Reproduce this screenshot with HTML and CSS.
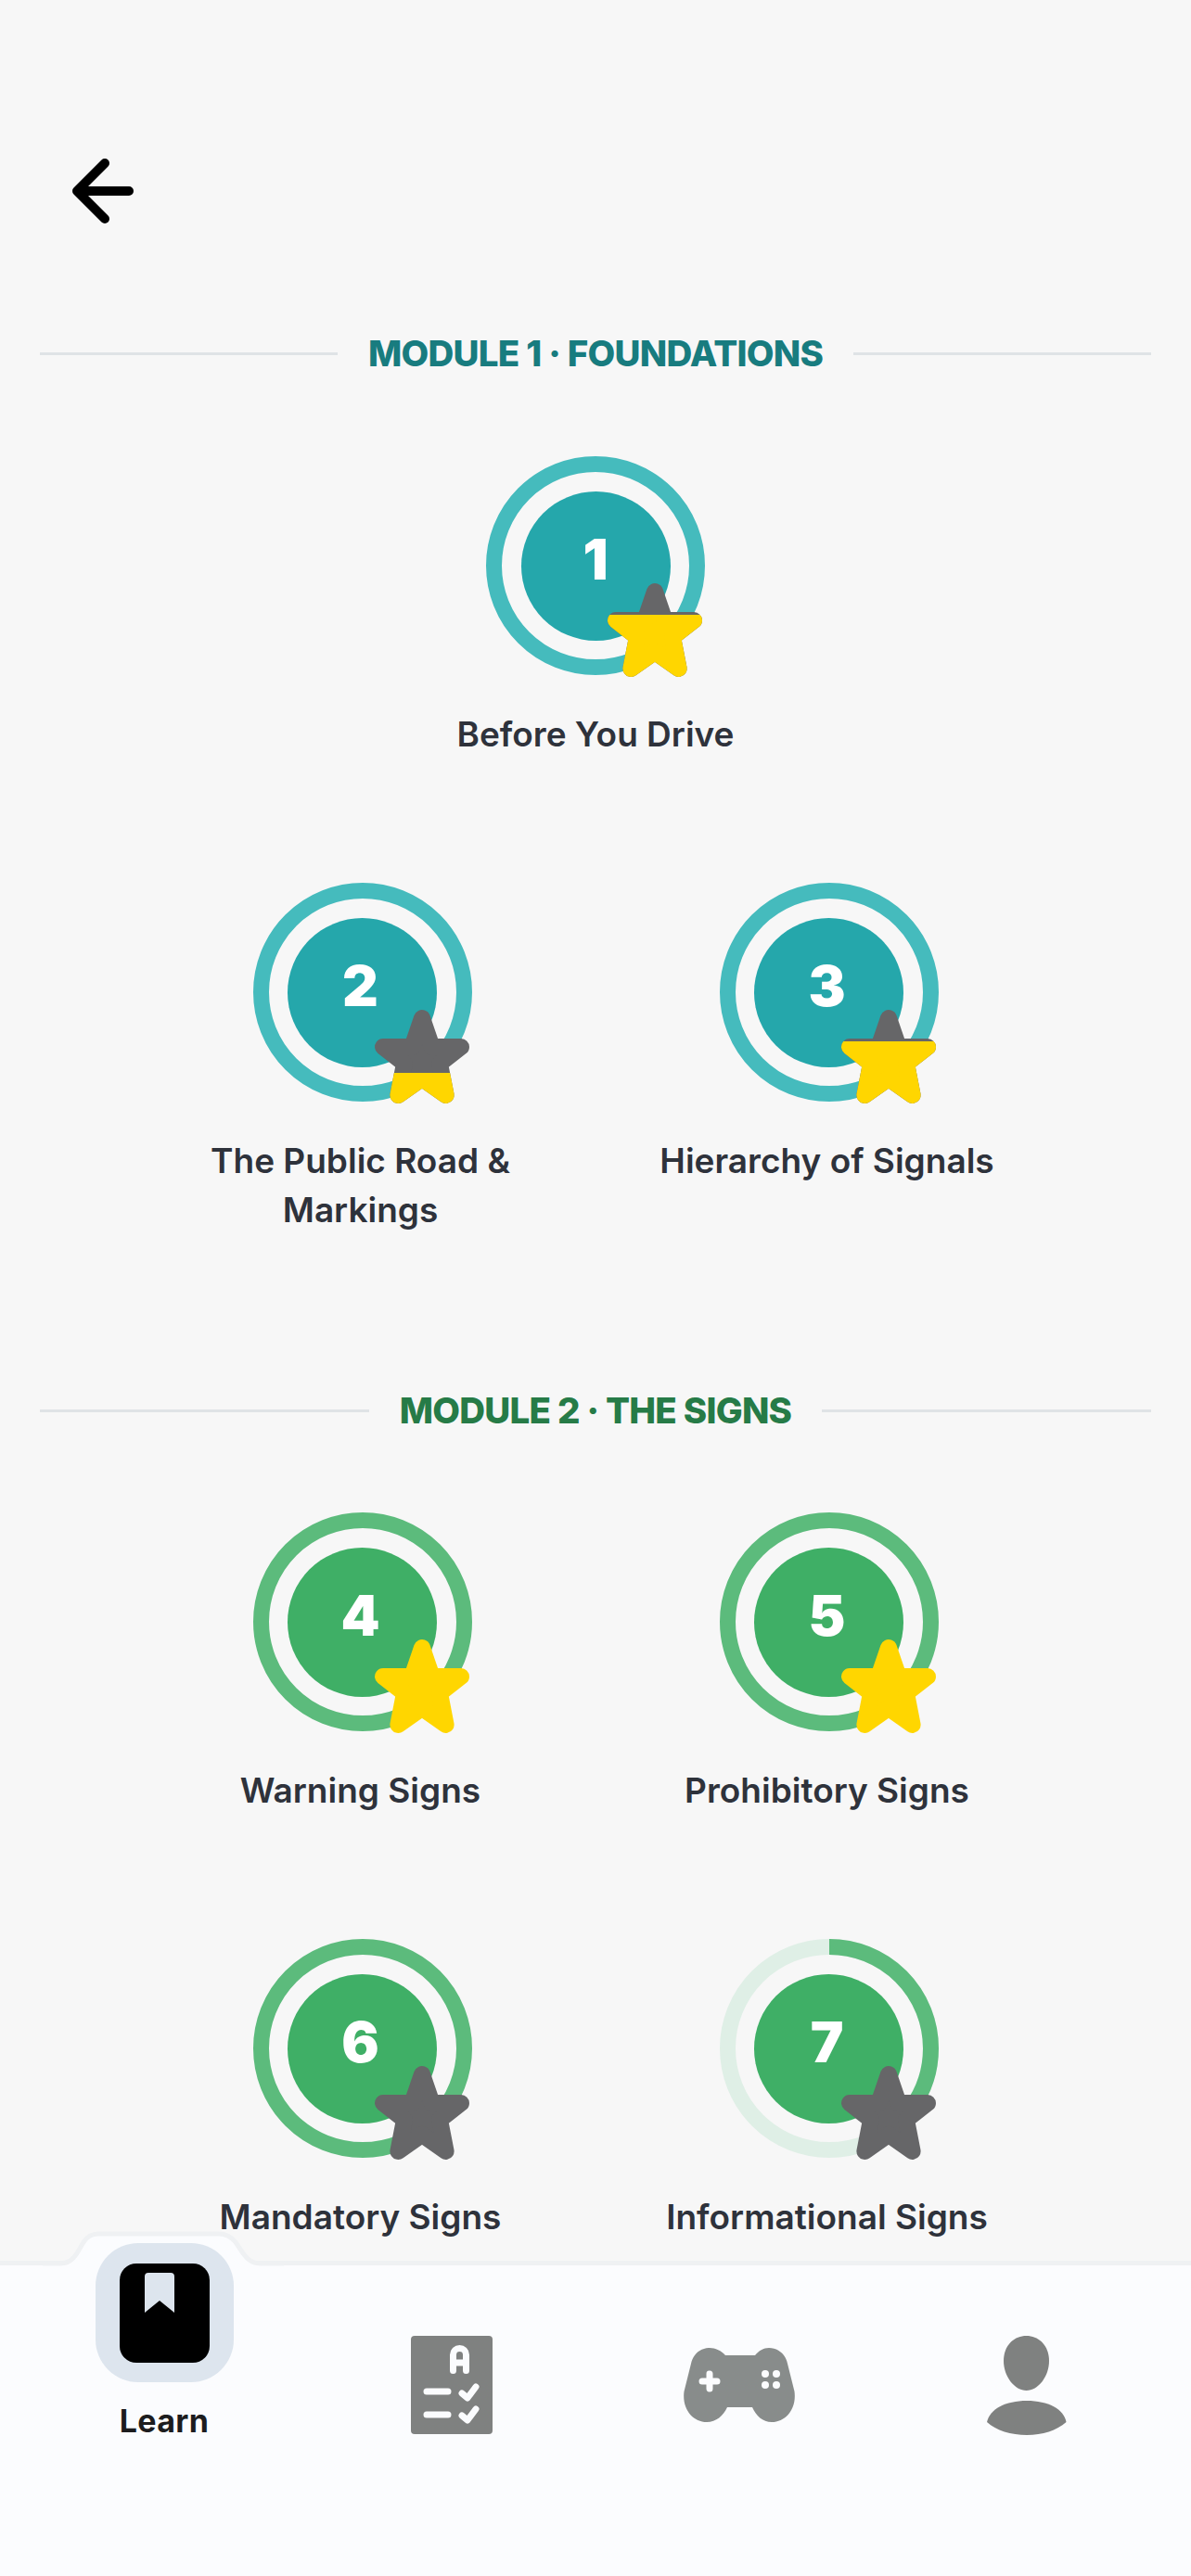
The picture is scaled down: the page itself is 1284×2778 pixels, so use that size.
FILE: index.html
```html
<!DOCTYPE html>
<html lang="en">
<head>
<meta charset="utf-8">
<title>Learn</title>
<link rel="stylesheet" href="styles.css">
</head>
<body>
<svg class="defs" width="0" height="0" aria-hidden="true">
  <defs>
    <polygon id="star" points="51,9 61.6,40 93,40 70,58 76.6,92 51,74 25.4,92 32,58 9,40 40.4,40"/>
    <clipPath id="fill-bottom-66"><rect x="-5" y="34" width="112" height="72"/></clipPath>
    <clipPath id="fill-bottom-33"><rect x="-5" y="68" width="112" height="38"/></clipPath>
  </defs>
</svg>
<div class="screen">
  <main class="content">
    <header class="topbar">
      <button class="back" aria-label="Back">
        <svg width="70" height="74" viewBox="0 0 70 74"><path d="M39 7 L9 37 L39 67 M9 37 H65" /></svg>
      </button>
    </header>

    <section class="module module-teal">
      <h2 class="module-title"><span>MODULE 1 · FOUNDATIONS</span></h2>
      <div class="path">
        <div class="lesson lesson-wide">
          <div class="badge">
            <svg class="ring" viewBox="0 0 236 236"><circle class="ring-value" cx="118" cy="118" r="109.5"/></svg>
            <div class="disc"><span>1</span></div>
            <svg class="star" viewBox="0 0 102 101"><use href="#star" class="star-empty"/><use href="#star" class="star-full" clip-path="url(#fill-bottom-66)"/></svg>
          </div>
          <p class="lesson-name">Before You Drive</p>
        </div>
        <div class="lesson">
          <div class="badge">
            <svg class="ring" viewBox="0 0 236 236"><circle class="ring-value" cx="118" cy="118" r="109.5"/></svg>
            <div class="disc"><span>2</span></div>
            <svg class="star" viewBox="0 0 102 101"><use href="#star" class="star-empty"/><use href="#star" class="star-full" clip-path="url(#fill-bottom-33)"/></svg>
          </div>
          <p class="lesson-name">The Public Road &amp; Markings</p>
        </div>
        <div class="lesson">
          <div class="badge">
            <svg class="ring" viewBox="0 0 236 236"><circle class="ring-value" cx="118" cy="118" r="109.5"/></svg>
            <div class="disc"><span>3</span></div>
            <svg class="star" viewBox="0 0 102 101"><use href="#star" class="star-empty"/><use href="#star" class="star-full" clip-path="url(#fill-bottom-66)"/></svg>
          </div>
          <p class="lesson-name">Hierarchy of Signals</p>
        </div>
      </div>
    </section>

    <section class="module module-green">
      <h2 class="module-title"><span>MODULE 2 · THE SIGNS</span></h2>
      <div class="path">
        <div class="lesson">
          <div class="badge">
            <svg class="ring" viewBox="0 0 236 236"><circle class="ring-value" cx="118" cy="118" r="109.5"/></svg>
            <div class="disc"><span>4</span></div>
            <svg class="star" viewBox="0 0 102 101"><use href="#star" class="star-full"/></svg>
          </div>
          <p class="lesson-name">Warning Signs</p>
        </div>
        <div class="lesson">
          <div class="badge">
            <svg class="ring" viewBox="0 0 236 236"><circle class="ring-value" cx="118" cy="118" r="109.5"/></svg>
            <div class="disc"><span>5</span></div>
            <svg class="star" viewBox="0 0 102 101"><use href="#star" class="star-full"/></svg>
          </div>
          <p class="lesson-name">Prohibitory Signs</p>
        </div>
        <div class="lesson">
          <div class="badge">
            <svg class="ring" viewBox="0 0 236 236"><circle class="ring-value" cx="118" cy="118" r="109.5"/></svg>
            <div class="disc"><span>6</span></div>
            <svg class="star" viewBox="0 0 102 101"><use href="#star" class="star-empty"/></svg>
          </div>
          <p class="lesson-name">Mandatory Signs</p>
        </div>
        <div class="lesson">
          <div class="badge">
            <svg class="ring" viewBox="0 0 236 236"><circle class="ring-track" cx="118" cy="118" r="109.5"/><circle class="ring-value ring-partial" cx="118" cy="118" r="109.5" pathLength="100"/></svg>
            <div class="disc"><span>7</span></div>
            <svg class="star" viewBox="0 0 102 101"><use href="#star" class="star-empty"/></svg>
          </div>
          <p class="lesson-name">Informational Signs</p>
        </div>
      </div>
    </section>
  </main>

  <nav class="tabbar">
    <svg class="tab-bump" width="260" height="45" viewBox="0 0 260 45">
      <path class="tab-bump-fill" d="M18 35 C28 35 32 31 37 24 L44 12 C48 6 52 3 60 3 H190 C198 3 203 6 208 12 L216 24 C221 31 226 35 236 35 V45 H18 Z"/>
      <path class="tab-bump-line" d="M0 35 H18 C28 35 32 31 37 24 L44 12 C48 6 52 3 60 3 H190 C198 3 203 6 208 12 L216 24 C221 31 226 35 236 35 H260"/>
    </svg>
    <a class="tab tab-active">
      <span class="tab-pill">
        <svg width="97" height="107" viewBox="0 0 97 107"><rect width="97" height="107" rx="18" fill="#000"/><path d="M27 14 a4 4 0 0 1 4-4 h24 a4 4 0 0 1 4 4 V53 L43 40 L27 53 Z" fill="#dde5ee"/></svg>
      </span>
      <span class="tab-label">Learn</span>
    </a>
    <a class="tab">
      <svg class="tab-icon" width="88" height="106" viewBox="0 0 88 106">
        <rect width="88" height="106" rx="4" fill="#7f8180"/>
        <g class="glyph-lines"><path d="M45.500 37.500 V20.500 a7 7 0 0 1 14 0 V37.500 M45.500 29 H59.500 M17 60 H40 M17 85 H40 M55 62 L61 67 L70 55 M55 86 L61 91 L70 79"/></g>
      </svg>
    </a>
    <a class="tab">
      <svg class="tab-icon tab-icon-pad" width="120" height="80" viewBox="0 0 120 80">
        <path d="M45 8 H77 C81 3 86 0 92 0 C102 0 110 7 112 17 L119.500 47 C122 66 110 80 95 80 C85 80 78 73 74 64 H47 C43 73 35 80 25 80 C10 80 -2 66 .5 47 L8 17 C10 7 18 0 28 0 C34 0 41 3 45 8 Z" fill="#888c8b"/>
        <g class="glyph-lines"><path d="M28 28 V44 M20 36 H36"/></g>
        <g fill="#fbfcfe"><circle cx="88" cy="28" r="4"/><circle cx="100" cy="28" r="4"/><circle cx="88" cy="40" r="4"/><circle cx="100" cy="40" r="4"/></g>
      </svg>
    </a>
    <a class="tab">
      <svg class="tab-icon" width="86" height="107" viewBox="0 0 86 107" fill="#7f8180">
        <path d="M42.500 0 C56.500 0 67 11 67 27 C67 44 55 59 42.500 59 C30 59 18 44 18 27 C18 11 28.500 0 42.500 0 Z"/>
        <path d="M0 93 C3 79 20 70 43 70 C66 70 83 79 85.500 93 C75 102 60 107 43 107 C26 107 10 102 0 93 Z"/>
      </svg>
    </a>
  </nav>
</div>
</body>
</html>
```

FILE: styles.css
```css
* {
  box-sizing: border-box;
}

html,
body {
  margin: 0;
  padding: 0;
}

body {
  background: #f7f7f7;
  font-family: Inter, "Noto Sans", sans-serif;
}

.defs {
  position: absolute;
}

.screen {
  width: 1284px;
  height: 2778px;
  display: flex;
  flex-direction: column;
  overflow: hidden;
}

.content {
  flex: 1;
  min-height: 0;
  overflow: hidden;
  padding: 0 43px;
}

.topbar {
  height: 358px;
  padding: 169px 0 0 31px;
}

.back {
  display: block;
  width: 70px;
  height: 74px;
  padding: 0;
  border: 0;
  background: none;
}

.back svg {
  display: block;
  fill: none;
  stroke: #000;
  stroke-width: 10;
  stroke-linecap: round;
  stroke-linejoin: round;
  filter: blur(0.6px);
}

.module-title {
  display: flex;
  align-items: center;
  gap: 33px;
  height: 46px;
  margin: 0 0 88px;
  font-size: 38.500px;
  font-weight: 800;
  letter-spacing: -0.75px;
  line-height: 46px;
  white-space: nowrap;
}

.module-title::before,
.module-title::after {
  content: "";
  flex: 1;
  height: 3px;
  background: #dfe3e6;
}

.module + .module {
  margin-top: 86px;
}

.module-teal .module-title {
  color: #187c7f;
}

.module-green .module-title {
  color: #267b47;
  margin-bottom: 87px;
}

.path {
  display: grid;
  grid-template-columns: 503px 503px;
  grid-auto-rows: 460px;
  justify-content: center;
}

.lesson {
  display: flex;
  flex-direction: column;
  align-items: center;
}

.lesson-wide {
  grid-column: 1 / -1;
}

.badge {
  position: relative;
  width: 236px;
  height: 236px;
  flex: none;
  display: flex;
  align-items: center;
  justify-content: center;
}

.ring {
  position: absolute;
  inset: 0;
  fill: none;
  stroke-width: 17;
}

.module-teal .ring-value {
  stroke: #45bbbd;
}

.module-green .ring-value {
  stroke: #5cbb7c;
}

.ring-track {
  stroke: #dfefe6;
}

.ring-partial {
  stroke-dasharray: 35 100;
  transform: rotate(-90deg);
  transform-origin: 118px 118px;
}

.disc {
  width: 161px;
  height: 161px;
  border-radius: 50%;
  display: flex;
  align-items: center;
  justify-content: center;
  padding: 0 4px 14px 0;
  color: #fff;
  font-size: 60px;
  font-weight: 900;
  line-height: 1;
}

.lesson-wide .disc {
  padding-right: 0;
}

.module-teal .disc {
  background: #25a7ab;
}

.module-green .disc {
  background: #3faf66;
}

.star {
  position: absolute;
  left: 131px;
  top: 137px;
  width: 102px;
  height: 101px;
  overflow: visible;
}

.star use {
  stroke-width: 18;
  stroke-linejoin: round;
}

.star-empty {
  fill: #666668;
  stroke: #666668;
}

.star-full {
  fill: #ffd600;
  stroke: #ffd600;
}

.lesson-name {
  margin: 37px 0 0;
  width: 384px;
  padding-right: 4px;
  color: #2e323b;
  font-size: 37px;
  font-weight: 600;
  line-height: 53px;
  text-align: center;
}

.lesson-wide .lesson-name {
  padding-right: 0;
}

.tabbar {
  position: relative;
  flex: none;
  height: 340px;
  display: grid;
  grid-template-columns: repeat(4, 310px);
  padding: 0 22px;
  align-items: start;
  background: #fbfcfe;
  border-top: 5px solid #eff1f3;
}

.tab-bump {
  position: absolute;
  left: 46px;
  top: -37px;
}

.tab-bump-fill {
  fill: #fbfcfe;
}

.tab-bump-line {
  fill: none;
  stroke: #eff1f3;
  stroke-width: 5;
}

.tab {
  position: relative;
  display: flex;
  flex-direction: column;
  align-items: center;
  padding-top: 76px;
}

.tab-icon {
  display: block;
}

.tab-icon-pad {
  margin-top: 13px;
}

.tab-active {
  padding-top: 0;
  margin-top: -24px;
}

.tab-pill {
  width: 149px;
  height: 150px;
  border-radius: 46px;
  background: #dde5ee;
  display: flex;
  align-items: center;
  justify-content: center;
}

.tab-pill svg {
  display: block;
}

.tab-label {
  margin-top: 20px;
  color: #1c1c1e;
  font-size: 34px;
  font-weight: 700;
  letter-spacing: 0.3px;
  line-height: 44px;
}

.glyph-lines {
  fill: none;
  stroke: #fbfcfe;
  stroke-width: 7;
  stroke-linecap: round;
  stroke-linejoin: round;
}
```
